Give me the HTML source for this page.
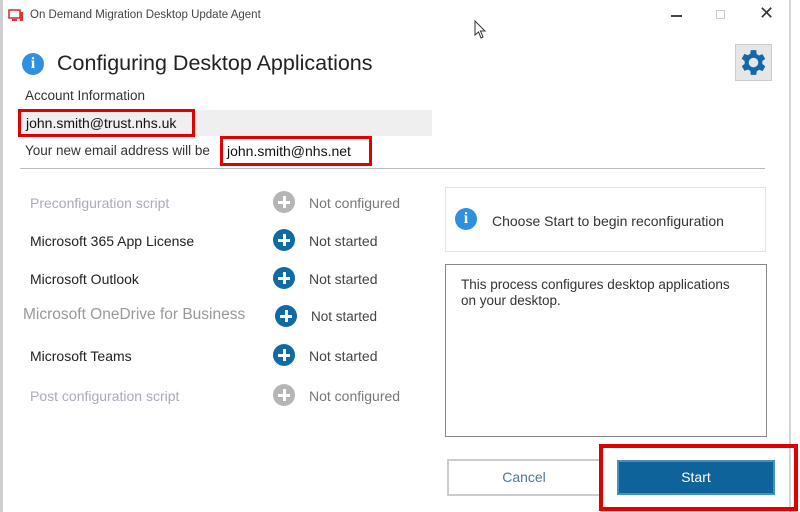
<!DOCTYPE html>
<html><head><meta charset="utf-8"><style>
*{margin:0;padding:0;box-sizing:border-box}
body{width:800px;height:512px;background:#fff;position:relative;overflow:hidden;font-family:"Liberation Sans",Arial,sans-serif;color:#222}
.a{position:absolute;white-space:nowrap}
.ic{position:absolute;width:22px;height:22px;border-radius:50%}
.ic::before{content:"";position:absolute;left:5px;top:9.5px;width:12px;height:3px;background:#fff}
.ic::after{content:"";position:absolute;left:9.5px;top:5px;width:3px;height:12px;background:#fff}
.blue{background:#0f6aa6}.gray{background:#b5b5b5}
.r{font-size:14px}
</style></head><body>
<div class="a" style="left:0;top:0;width:3px;height:512px;background:#cfcfcf"></div>
<div class="a" style="left:789px;top:0;width:2px;height:512px;background:#d4d4d4"></div>
<svg class="a" style="left:8px;top:9px" width="16" height="14"><rect x="1" y="1" width="11" height="8" fill="none" stroke="#d33" stroke-width="1.6"/><rect x="12" y="3" width="3" height="9" fill="#d33"/><rect x="4" y="10" width="5" height="2" fill="#d33"/></svg>
<div class="a" style="left:30px;top:9px;font-size:11.5px;color:#444">On Demand Migration Desktop Update Agent</div>
<div class="a" style="left:671px;top:15px;width:11px;height:1.5px;background:#444"></div>
<div class="a" style="left:716px;top:10px;width:9px;height:9px;border:1px solid #ccc"></div>
<div class="a" style="left:759px;top:3px;font-size:18px;color:#333">✕</div>
<svg class="a" style="left:474px;top:20px" width="14" height="20"><path d="M1 1 L1 15 L4.5 12 L7 18 L9 17 L6.5 11 L11 11 Z" fill="#fff" stroke="#333" stroke-width="1"/></svg>
<div class="a" style="left:22px;top:53px;width:22px;height:22px;border-radius:50%;background:#2f8fe0;color:#fff;font:bold 16px/22px 'Liberation Serif',serif;text-align:center">i</div>
<div class="a" style="left:57px;top:51px;font-size:21.5px;color:#222">Configuring Desktop Applications</div>
<div class="a" style="left:735px;top:44px;width:37px;height:37px;background:#e6e6e6;border:1px solid #ccc"></div>
<svg class="a" style="left:737px;top:46px" width="33" height="33" viewBox="0 0 24 24"><path fill="#1467a8" d="M19.4 13a7.5 7.5 0 0 0 0-2l2.1-1.6-2-3.5-2.5 1a7 7 0 0 0-1.7-1L15 3h-4l-.4 2.7a7 7 0 0 0-1.7 1l-2.5-1-2 3.5L6.6 11a7.5 7.5 0 0 0 0 2l-2.1 1.6 2 3.5 2.5-1a7 7 0 0 0 1.7 1L11 21h4l.4-2.7a7 7 0 0 0 1.7-1l2.5 1 2-3.5zM13 15.5a3.5 3.5 0 1 1 0-7 3.5 3.5 0 0 1 0 7z" transform="translate(-1 0)"/></svg>
<div class="a" style="left:25px;top:88px;font-size:13.5px;color:#333">Account Information</div>
<div class="a" style="left:18px;top:110px;width:414px;height:26px;background:#efefef"></div>
<div class="a" style="left:18px;top:109px;width:177px;height:28px;border:3px solid #e00000"></div>
<div class="a" style="left:26px;top:115px;font-size:14px;color:#111">john.smith@trust.nhs.uk</div>
<div class="a" style="left:25px;top:143px;font-size:13.5px;color:#333">Your new email address will be</div>
<div class="a" style="left:220px;top:136px;width:152px;height:30px;border:3px solid #e00000;background:#fff"></div>
<div class="a" style="left:227px;top:143px;font-size:14px;color:#111">john.smith@nhs.net</div>
<div class="a" style="left:20px;top:168px;width:745px;height:1px;background:#bbb"></div>
<div class="a r" style="left:30px;top:195px;color:#aab">Preconfiguration script</div>
<div class="ic gray" style="left:273px;top:191px"></div>
<div class="a r" style="left:309px;top:195px;color:#777">Not configured</div>
<div class="a r" style="left:30px;top:233px;color:#222">Microsoft 365 App License</div>
<div class="ic blue" style="left:273px;top:229px"></div>
<div class="a r" style="left:309px;top:233px;color:#444">Not started</div>
<div class="a r" style="left:30px;top:271px;color:#222">Microsoft Outlook</div>
<div class="ic blue" style="left:273px;top:267px"></div>
<div class="a r" style="left:309px;top:271px;color:#444">Not started</div>
<div class="a" style="left:23px;top:306px;font-size:15.5px;color:#999">Microsoft OneDrive for Business</div>
<div class="ic blue" style="left:275px;top:305px"></div>
<div class="a" style="left:311px;top:309px;font-size:13.5px;color:#444">Not started</div>
<div class="a r" style="left:30px;top:348px;color:#222">Microsoft Teams</div>
<div class="ic blue" style="left:273px;top:344px"></div>
<div class="a r" style="left:309px;top:348px;color:#444">Not started</div>
<div class="a r" style="left:30px;top:388px;color:#aab">Post configuration script</div>
<div class="ic gray" style="left:273px;top:384px"></div>
<div class="a r" style="left:309px;top:388px;color:#777">Not configured</div>
<div class="a" style="left:445px;top:187px;width:321px;height:65px;border:1px solid #e4e4e4"></div>
<div class="a" style="left:455px;top:208px;width:22px;height:22px;border-radius:50%;background:#2f8fe0;color:#fff;font:bold 16px/22px 'Liberation Serif',serif;text-align:center">i</div>
<div class="a" style="left:492px;top:213px;font-size:14px;color:#333">Choose Start to begin reconfiguration</div>
<div class="a" style="left:445px;top:264px;width:322px;height:173px;border:1px solid #888"></div>
<div class="a" style="left:461px;top:277px;font-size:13.5px;color:#333;line-height:16px;white-space:normal;width:282px">This process configures desktop applications on your desktop.</div>
<div class="a" style="left:447px;top:459px;width:154px;height:37px;border:2px solid #ccc;background:#fff;text-align:center;font-size:14px;line-height:33px;color:#4a7a9a">Cancel</div>
<div class="a" style="left:599px;top:444px;width:199px;height:67px;border:4px solid #e00000"></div>
<div class="a" style="left:617px;top:460px;width:158px;height:35px;background:#0e639b;border:2px solid #4a8fc4;text-align:center;font-size:14px;line-height:31px;color:#fff">Start</div>
</body></html>
